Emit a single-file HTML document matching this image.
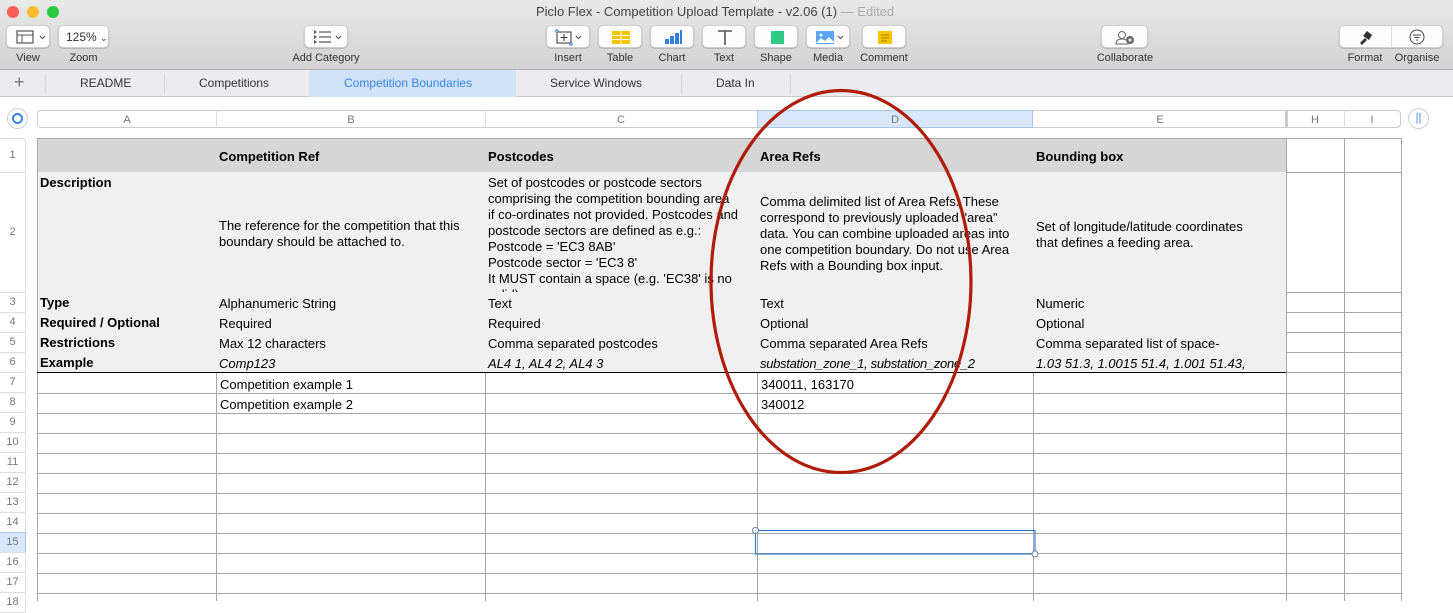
<!DOCTYPE html>
<html><head><meta charset="utf-8">
<style>
*{margin:0;padding:0;box-sizing:border-box}
body{width:1453px;height:601px;overflow:hidden;background:#fff;font-family:"Liberation Sans",sans-serif;position:relative}
.a{position:absolute;white-space:nowrap}
.tb{position:absolute;top:0;left:0;width:1453px;height:70px;background:linear-gradient(#e9e9e9,#d2d2d2);border-bottom:1px solid #b0b0b0}
.btn{position:absolute;top:25px;height:23px;background:#fdfdfd;border-radius:5px;box-shadow:0 0.5px 1px rgba(0,0,0,.3);border:1px solid #cfcfcf}
.lbl{position:absolute;top:52px;font-size:11px;color:#333;text-align:center}
.tabs{position:absolute;top:70px;left:0;width:1453px;height:27px;background:#ececf0;border-bottom:1px solid #c9c9c9}
.tab{position:absolute;top:6px;font-size:12px;color:#333}
.sep{position:absolute;top:5px;width:1px;height:18px;background:#d6d6d6}
.c{font-size:13px;color:#000;letter-spacing:0}
.b{font-weight:bold}
.i{font-style:italic}
.rn{position:absolute;left:0;width:26px;font-size:11px;color:#777;text-align:center;border:1px solid #ddd;border-left:none;background:#fff}
.ml{line-height:16px;white-space:nowrap}
</style></head><body>
<div class="tb"></div>
<div class="a" style="left:7px;top:6px;width:12px;height:12px;border-radius:50%;background:#fc5f57"></div>
<div class="a" style="left:27px;top:6px;width:12px;height:12px;border-radius:50%;background:#fdbc2e"></div>
<div class="a" style="left:47px;top:6px;width:12px;height:12px;border-radius:50%;background:#28c840"></div>
<div class="a" style="left:536px;top:4px;font-size:13px;color:#444">Piclo Flex - Competition Upload Template - v2.06 (1) <span style="color:#aaa">— Edited</span></div>

<div class="btn" style="left:6px;width:44px"><svg width="44" height="23"><rect x="10" y="5" width="16" height="12" fill="none" stroke="#555" stroke-width="1.2"/><line x1="10" y1="9" x2="26" y2="9" stroke="#555"/><line x1="15" y1="9" x2="15" y2="17" stroke="#555"/><path d="M33 10l2.5 2.5 2.5-2.5" fill="none" stroke="#555" stroke-width="1.2"/></svg></div>
<div class="lbl" style="left:6px;width:44px">View</div>
<div class="btn" style="left:58px;width:51px;font-size:12px;color:#333;padding:4px 0 0 7px">125% <span style="font-size:9px">⌄</span></div>
<div class="lbl" style="left:58px;width:51px">Zoom</div>
<div class="btn" style="left:304px;width:44px"><svg width="44" height="23"><g stroke="#555" stroke-width="1.2"><line x1="14" y1="6" x2="26" y2="6"/><line x1="14" y1="11" x2="26" y2="11"/><line x1="14" y1="16" x2="26" y2="16"/></g><g fill="#555"><path d="M9 4l3 2-3 2z"/><path d="M9 9l3 2-3 2z"/><path d="M9 14l3 2-3 2z"/></g><path d="M31 10l2.5 2.5 2.5-2.5" fill="none" stroke="#555" stroke-width="1.2"/></svg></div>
<div class="lbl" style="left:280px;width:92px">Add Category</div>

<div class="btn" style="left:546px;width:44px"><svg width="44" height="23"><rect x="10" y="6" width="14" height="11" fill="none" stroke="#333"/><path d="M17 8v7M13.5 11.5h7" stroke="#333"/><circle cx="10" cy="5" r="1.3" fill="#fff" stroke="#3a7bd5"/><circle cx="24" cy="18" r="1.3" fill="#fff" stroke="#3a7bd5"/><path d="M29 10l2.5 2.5 2.5-2.5" fill="none" stroke="#555" stroke-width="1.2"/></svg></div>
<div class="lbl" style="left:546px;width:44px">Insert</div>
<div class="btn" style="left:598px;width:44px"><svg width="44" height="23"><rect x="13" y="5" width="18" height="13" fill="#f6c500"/><path d="M13 9.5h18M13 13.5h18M22 5v13" stroke="#fff" stroke-width="1"/></svg></div>
<div class="lbl" style="left:598px;width:44px">Table</div>
<div class="btn" style="left:650px;width:44px"><svg width="44" height="23"><rect x="14" y="13" width="4" height="5" fill="#2f7ee0"/><rect x="19" y="10" width="4" height="8" fill="#2f7ee0"/><rect x="24" y="7" width="4" height="11" fill="#2f7ee0"/><rect x="29" y="4" width="2" height="14" fill="#2f7ee0"/></svg></div>
<div class="lbl" style="left:650px;width:44px">Chart</div>
<div class="btn" style="left:702px;width:44px"><svg width="44" height="23"><path d="M15 5h14M22 5v14" stroke="#555" stroke-width="1.6"/></svg></div>
<div class="lbl" style="left:702px;width:44px">Text</div>
<div class="btn" style="left:754px;width:44px"><svg width="44" height="23"><rect x="16" y="5" width="13" height="13" fill="#2fcb85"/></svg></div>
<div class="lbl" style="left:754px;width:44px">Shape</div>
<div class="btn" style="left:806px;width:44px"><svg width="44" height="23"><rect x="9" y="5" width="18" height="13" fill="#5aa3f0"/><path d="M9 17l5-5 4 3 4-4 5 5v1H9z" fill="#fff"/><circle cx="14" cy="9" r="1.5" fill="#fff"/><path d="M31 10l2.5 2.5 2.5-2.5" fill="none" stroke="#555" stroke-width="1.2"/></svg></div>
<div class="lbl" style="left:806px;width:44px">Media</div>
<div class="btn" style="left:862px;width:44px"><svg width="44" height="23"><rect x="15" y="5" width="14" height="13" fill="#f7c600"/><path d="M18 9h8M18 12h8M18 15h6" stroke="#8a6a00" stroke-width=".8"/></svg></div>
<div class="lbl" style="left:852px;width:64px">Comment</div>

<div class="btn" style="left:1101px;width:47px"><svg width="47" height="23"><circle cx="20" cy="9" r="3.5" fill="none" stroke="#666"/><path d="M14 18c0-4 3-5 6-5s6 1 6 5z" fill="none" stroke="#666"/><circle cx="28" cy="14" r="4" fill="#666"/><path d="M28 12v4M26 14h4" stroke="#fff"/></svg></div>
<div class="lbl" style="left:1090px;width:70px">Collaborate</div>
<div class="btn" style="left:1339px;width:104px"><div class="a" style="left:51px;top:0;width:1px;height:21px;background:#ddd"></div><svg width="104" height="23"><path d="M20 17l5-5 2 2-5 5z" fill="#333"/><path d="M23 10l4-5 5 4-3 5z" fill="#333"/><circle cx="77" cy="11" r="7" fill="none" stroke="#444"/><path d="M73 9h8M74.5 11.5h5M76 14h2" stroke="#444"/></svg></div>
<div class="lbl" style="left:1339px;width:52px">Format</div>
<div class="lbl" style="left:1391px;width:52px">Organise</div>

<div class="tabs"></div>
<div class="a" style="left:309px;top:70px;width:207px;height:27px;background:#cfe2f8"></div>
<div class="a" style="left:14px;top:72px;font-size:18px;color:#777;font-weight:300">+</div>
<div class="sep" style="left:45px;top:75px"></div>
<div class="tab" style="left:80px;top:76px">README</div>
<div class="sep" style="left:164px;top:75px"></div>
<div class="tab" style="left:199px;top:76px">Competitions</div>
<div class="tab" style="left:344px;top:76px;color:#3a86e8">Competition Boundaries</div>
<div class="tab" style="left:550px;top:76px">Service Windows</div>
<div class="sep" style="left:681px;top:75px"></div>
<div class="tab" style="left:716px;top:76px">Data In</div>
<div class="sep" style="left:790px;top:75px"></div>

<div class="a" style="left:7px;top:108px;width:21px;height:21px;border-radius:50%;border:1px solid #ccc;background:#fff"><div class="a" style="left:4px;top:4px;width:11px;height:11px;border-radius:50%;border:2px solid #3a86e8"></div></div>
<div class="a" style="left:1408px;top:108px;width:21px;height:21px;border-radius:50%;border:1px solid #ccc;background:#fff;color:#3a86e8;font-size:11px;text-align:center;line-height:18px">||</div>
<div class="a" style="left:37px;top:110px;width:1249px;height:18px;border:1px solid #ccc;border-radius:4px 0 0 4px;background:#fff"></div>
<div class="a" style="left:1286px;top:110px;width:115px;height:18px;border:1px solid #ccc;border-radius:0 4px 4px 0;background:#fff;border-left:2px solid #ccc"></div>
<div class="a" style="left:757px;top:110px;width:276px;height:18px;background:#d8e7fb;border:1px solid #a9c4e6"></div>
<svg class="a" style="left:0;top:0" width="1453" height="601">
<g stroke="#ddd"><line x1="216.5" y1="110" x2="216.5" y2="128"/><line x1="485.5" y1="110" x2="485.5" y2="128"/><line x1="1344.5" y1="110" x2="1344.5" y2="128"/></g>
<g font-family="Liberation Sans" font-size="11" fill="#777" text-anchor="middle"><text x="127" y="123">A</text><text x="351" y="123">B</text><text x="621" y="123">C</text><text x="895" y="123">D</text><text x="1160" y="123">E</text><text x="1315" y="123">H</text><text x="1372" y="123">I</text></g>
</svg>

<div class="a" style="left:37px;top:138px;width:1249px;height:34px;background:#d6d6d6"></div>
<div class="a" style="left:37px;top:172px;width:1249px;height:201px;background:#f0f0f0"></div>
<svg class="a" style="left:0;top:0" width="1453" height="601">
<g stroke="#a6a6a6" stroke-width="1">
<line x1="37.5" y1="138" x2="37.5" y2="601"/>
<line x1="37" y1="138.5" x2="1401" y2="138.5"/>
<line x1="1286.5" y1="138" x2="1286.5" y2="601"/>
<line x1="1344.5" y1="138" x2="1344.5" y2="601"/>
<line x1="1401.5" y1="138" x2="1401.5" y2="601"/>
<line x1="1286" y1="172.5" x2="1401" y2="172.5"/>
<line x1="1286" y1="292.5" x2="1401" y2="292.5"/>
<line x1="1286" y1="312.5" x2="1401" y2="312.5"/>
<line x1="1286" y1="332.5" x2="1401" y2="332.5"/>
<line x1="1286" y1="352.5" x2="1401" y2="352.5"/>
<line x1="216.5" y1="373" x2="216.5" y2="601"/>
<line x1="485.5" y1="373" x2="485.5" y2="601"/>
<line x1="757.5" y1="373" x2="757.5" y2="601"/>
<line x1="1033.5" y1="373" x2="1033.5" y2="601"/>
<line x1="1286" y1="372.5" x2="1401" y2="372.5"/>
<line x1="37" y1="393.5" x2="1401" y2="393.5"/>
<line x1="37" y1="413.5" x2="1401" y2="413.5"/>
<line x1="37" y1="433.5" x2="1401" y2="433.5"/>
<line x1="37" y1="453.5" x2="1401" y2="453.5"/>
<line x1="37" y1="473.5" x2="1401" y2="473.5"/>
<line x1="37" y1="493.5" x2="1401" y2="493.5"/>
<line x1="37" y1="513.5" x2="1401" y2="513.5"/>
<line x1="37" y1="533.5" x2="1401" y2="533.5"/>
<line x1="37" y1="553.5" x2="1401" y2="553.5"/>
<line x1="37" y1="573.5" x2="1401" y2="573.5"/>
<line x1="37" y1="593.5" x2="1401" y2="593.5"/>
</g>
<line x1="37" y1="372.5" x2="1286" y2="372.5" stroke="#000"/>
</svg>

<div class="rn" style="top:138px;height:35px;line-height:33px;border-radius:0 4px 0 0">1</div>
<div class="rn" style="top:172px;height:121px;line-height:119px">2</div>
<div class="rn" style="top:292px;height:21px;line-height:19px">3</div>
<div class="rn" style="top:312px;height:21px;line-height:19px">4</div>
<div class="rn" style="top:332px;height:21px;line-height:19px">5</div>
<div class="rn" style="top:352px;height:21px;line-height:19px">6</div>
<div class="rn" style="top:372px;height:21px;line-height:19px">7</div>
<div class="rn" style="top:392px;height:21px;line-height:19px">8</div>
<div class="rn" style="top:412px;height:21px;line-height:19px">9</div>
<div class="rn" style="top:432px;height:21px;line-height:19px">10</div>
<div class="rn" style="top:452px;height:21px;line-height:19px">11</div>
<div class="rn" style="top:472px;height:21px;line-height:19px">12</div>
<div class="rn" style="top:492px;height:21px;line-height:19px">13</div>
<div class="rn" style="top:512px;height:21px;line-height:19px">14</div>
<div class="rn" style="top:532px;height:21px;line-height:19px;background:#d8e7fb;border-color:#a9c4e6">15</div>
<div class="rn" style="top:552px;height:21px;line-height:19px">16</div>
<div class="rn" style="top:572px;height:21px;line-height:19px">17</div>
<div class="rn" style="top:592px;height:21px;line-height:19px">18</div>

<div class="a c b" style="left:219px;top:149px">Competition Ref</div>
<div class="a c b" style="left:488px;top:149px">Postcodes</div>
<div class="a c b" style="left:760px;top:149px">Area Refs</div>
<div class="a c b" style="left:1036px;top:149px">Bounding box</div>
<div class="a c b" style="left:40px;top:175px">Description</div>
<div class="a c ml" style="left:219px;top:218px">The reference for the competition that this<br>boundary should be attached to.</div>
<div class="a c ml" style="left:488px;top:175px;height:117px;overflow:hidden">Set of postcodes or postcode sectors<br>comprising the competition bounding area<br>if co-ordinates not provided. Postcodes and<br>postcode sectors are defined as e.g.:<br>Postcode = 'EC3 8AB'<br>Postcode sector = 'EC3 8'<br>It MUST contain a space (e.g. 'EC38' is no<br>valid)</div>
<div class="a c ml" style="left:760px;top:194px">Comma delimited list of Area Refs. These<br>correspond to previously uploaded "area"<br>data. You can combine uploaded areas into<br>one competition boundary. Do not use Area<br>Refs with a Bounding box input.</div>
<div class="a c ml" style="left:1036px;top:219px">Set of longitude/latitude coordinates<br>that defines a feeding area.</div>
<div class="a c b" style="left:40px;top:295px">Type</div>
<div class="a c" style="left:219px;top:296px">Alphanumeric String</div>
<div class="a c" style="left:488px;top:296px">Text</div>
<div class="a c" style="left:760px;top:296px">Text</div>
<div class="a c" style="left:1036px;top:296px">Numeric</div>
<div class="a c b" style="left:40px;top:315px">Required / Optional</div>
<div class="a c" style="left:219px;top:316px">Required</div>
<div class="a c" style="left:488px;top:316px">Required</div>
<div class="a c" style="left:760px;top:316px">Optional</div>
<div class="a c" style="left:1036px;top:316px">Optional</div>
<div class="a c b" style="left:40px;top:335px">Restrictions</div>
<div class="a c" style="left:219px;top:336px">Max 12 characters</div>
<div class="a c" style="left:488px;top:336px">Comma separated postcodes</div>
<div class="a c" style="left:760px;top:336px">Comma separated Area Refs</div>
<div class="a c" style="left:1036px;top:336px">Comma separated list of space-</div>
<div class="a c b" style="left:40px;top:355px">Example</div>
<div class="a c i" style="left:219px;top:356px">Comp123</div>
<div class="a c i" style="left:488px;top:356px">AL4 1, AL4 2, AL4 3</div>
<div class="a c i" style="left:760px;top:356px;letter-spacing:-0.3px">substation_zone_1, substation_zone_2</div>
<div class="a c i" style="left:1036px;top:356px">1.03 51.3, 1.0015 51.4, 1.001 51.43,</div>
<div class="a c" style="left:220px;top:377px">Competition example 1</div>
<div class="a c" style="left:220px;top:397px">Competition example 2</div>
<div class="a c" style="left:761px;top:377px">340011, 163170</div>
<div class="a c" style="left:761px;top:397px">340012</div>

<svg class="a" style="left:0;top:0" width="1453" height="601">
<rect x="755.5" y="530.5" width="279.5" height="23.5" fill="none" stroke="#3a78c8" stroke-width="1.2"/>
<circle cx="755.5" cy="530.5" r="3" fill="#fff" stroke="#5a7fb0"/>
<circle cx="1035" cy="554" r="3" fill="#fff" stroke="#5a7fb0"/>
<ellipse cx="841" cy="281.5" rx="130" ry="191" fill="none" stroke="#b01c0a" stroke-width="3.2"/>
</svg>
</body></html>
